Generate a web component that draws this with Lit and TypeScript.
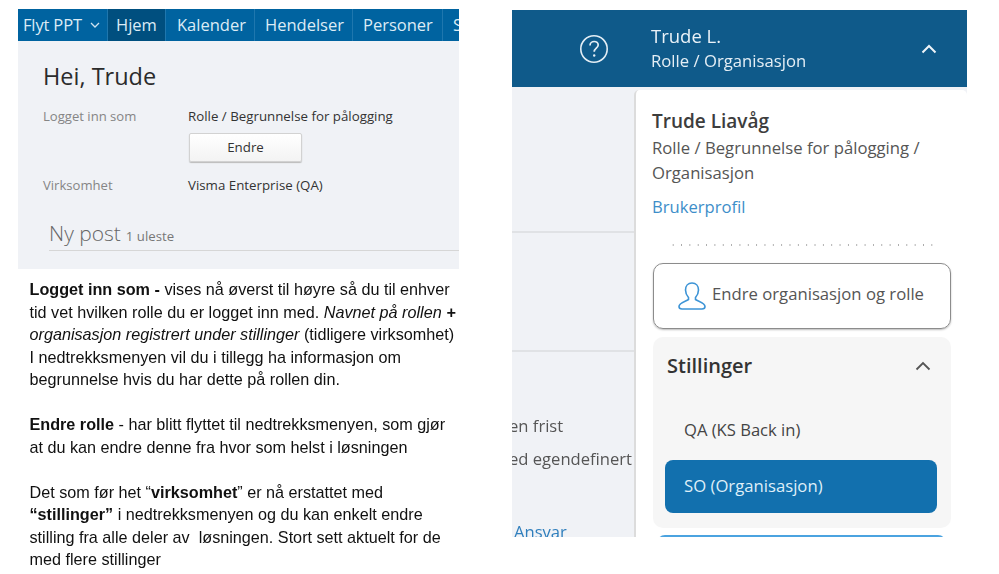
import { LitElement, html, css } from "lit";
import { customElement } from "lit/decorators.js";

@customElement("app-root")
export class AppRoot extends LitElement {
  static styles = css`
    :host { display: block; width: 999px; height: 574px; background: #fff; overflow: hidden; font-family: "Open Sans", sans-serif; }
    * { box-sizing: border-box; }
    .page { display: flex; height: 574px; align-items: flex-start; filter: blur(0.35px); }
    .left { width: 459px; margin-left: 18px; flex: none; }
    .shot { width: 441px; height: 260px; margin-top: 9px; background: #f0f2f6; overflow: hidden; }
    .nav { display: flex; height: 32px; background: #0063a0; color: #dcebf5; font-size: 16.5px; line-height: 31px; white-space: nowrap; overflow: hidden; }
    .nav div { display: flex; align-items: flex-start; border-right: 1px solid #1f77ae; flex: none; }
    .nav .flyt { width: 90px; padding-left: 5px; gap: 7px; letter-spacing: -0.15px; }
    .nav .flyt svg { margin-top: 12px; }
    .nav .hjem { width: 58px; padding-left: 8px; background: #004f7f; }
    .nav .kal { width: 89px; padding-left: 11px; }
    .nav .hen { width: 98px; padding-left: 10px; }
    .nav .per { width: 90px; padding-left: 10px; }
    .nav .s { border: 0; padding-left: 10px; }
    .body { padding: 19px 24px 0 25px; color: #333; }
    h1 { margin: 0; font-weight: 400; font-size: 23.5px; line-height: 32px; color: #2b2b2b; }
    .row { display: flex; font-size: 13.3px; line-height: 18px; }
    .row .k { width: 145px; color: #858585; flex: none; font-size: 13.1px; }
    .r1 { margin-top: 15px; }
    .r2 { margin-top: 14px; }
    .endre { display: block; width: 113px; height: 29px; margin: 8px 0 0 1px; border: 1px solid #d2d2d2; border-radius: 2px; background: linear-gradient(#fff, #f3f3f3); box-shadow: 0 1px 1px #bbb; text-align: center; font-size: 13.3px; line-height: 27px; color: #333; }
    .post { margin: 23px -24px 0 6px; border-bottom: 1px solid #d6d6d6; height: 34px; display: flex; align-items: baseline; gap: 5px; color: #666; font-size: 21px; line-height: 32px; font-weight: 300; }
    .post span { font-size: 13.2px; font-weight: 400; color: #777; }
    .notes { margin: 9px 0 0 11.5px; font-family: "Liberation Sans", sans-serif; font-size: 16.2px; line-height: 22.5px; color: #111; white-space: nowrap; }
    .notes p { margin: 0 0 22.5px; }
    .right { width: 455px; margin: 10px 0 0 35px; height: 527px; flex: none; overflow: hidden; display: flex; flex-direction: column; }
    .bar { height: 77px; flex: none; background: #0f5a8a; color: #fff; display: flex; align-items: center; }
    .help { margin-left: 67px; width: 30px; height: 30px; flex: none; }
    .who { margin-left: 42px; width: 269px; font-size: 18.5px; line-height: 25px; color: #eaf2f8; margin-top: -1px; }
    .who small { display: block; font-size: 16.7px; line-height: 25px; font-weight: 500; color: #e4eef5; }
    .below { flex: 1; display: flex; min-height: 0; background: #f0f2f6; }
    .bg { width: 122px; flex: none; color: #555; font-size: 16.6px; line-height: 33px; white-space: nowrap; overflow: hidden; }
    .bg .d1 { height: 146px; border-bottom: 2px solid #e0e2e5; }
    .bg .d2 { height: 119px; border-bottom: 2px solid #e0e2e5; }
    .bg .t1 { margin: 57px 0 0 -3px; }
    .bg .t2 { margin-left: -3px; }
    .bg .a { margin: 40px 0 0 2px; color: #2f7fbd; }
    .menu { flex: 1; margin-top: 3px; background: #fff; border-left: 2px solid #dcdcdc; border-radius: 5px 5px 0 0; padding: 0 16px 0 17px; min-width: 0; color: #505050; font-size: 16.6px; }
    .name { margin-top: 18px; font-size: 19px; line-height: 26px; font-weight: 600; color: #3d3d3d; margin-left: -1px; }
    .roles { margin-top: 2px; line-height: 24.5px; font-size: 16.7px; color: #555; margin-left: -1px; }
    .prof { display: block; margin: 10px 0 0 -1px; line-height: 24px; color: #3d8ec9; }
    .dots { margin: 25px 16px 0 16px; height: 2px; background: radial-gradient(circle, #aaa 0.8px, transparent 1px) 0 0 / 8.35px 2px repeat-x; }
    .change { margin-top: 17px; height: 66px; width: 298px; border: 1.5px solid #8c8c8c; border-radius: 10px; box-shadow: 0 1px 2px #bbb; display: flex; align-items: center; padding: 0 0 5px 23px; gap: 5px; color: #555; font-size: 16.7px; white-space: nowrap; }
    .change svg { margin-top: 4px; flex: none; }
    .pos { margin-top: 8px; width: 298px; height: 191px; border-radius: 10px; background: #f6f6f6; padding: 0 14px 0 12px; }
    .pos .h { display: flex; justify-content: space-between; align-items: center; padding: 0 5px 0 2px; height: 57px; font-size: 20px; font-weight: 600; color: #333; }
    .qa { margin-top: 23px; padding-left: 19px; line-height: 26px; font-size: 16.6px; color: #444; }
    .so { margin-top: 17px; height: 53px; border-radius: 8px; background: #1270ae; color: #dfeef8; padding-left: 19px; line-height: 52px; font-size: 16.7px; }
    .next { margin: 7px 0 0 4px; width: 289px; height: 20px; border-radius: 8px 8px 0 0; background: #1b77b8; border-top: 2px solid #4ba3e0; }
  `;

  render() {
    return html`<div class="page">
      <div class="left">
        <div class="shot">
          <div class="nav">
            <div class="flyt">Flyt PPT
              <svg width="12" height="8" viewBox="0 0 12 8"><path d="M2 2l4 4 4-4" fill="none" stroke="#cfe3f0" stroke-width="1.3"/></svg>
            </div>
            <div class="hjem">Hjem</div>
            <div class="kal">Kalender</div>
            <div class="hen">Hendelser</div>
            <div class="per">Personer</div>
            <div class="s">Søk</div>
          </div>
          <div class="body">
            <h1>Hei, Trude</h1>
            <div class="row r1"><div class="k">Logget inn som</div>
              <div>Rolle / Begrunnelse for pålogging<span class="endre">Endre</span></div></div>
            <div class="row r2"><div class="k">Virksomhet</div><div>Visma Enterprise (QA)</div></div>
            <div class="post">Ny post <span>1 uleste</span></div>
          </div>
        </div>
        <div class="notes">
          <p><b>Logget inn som -</b> vises nå øverst til høyre så du til enhver<br>tid vet hvilken rolle du er logget inn med. <i>Navnet på rollen <b>+</b><br>organisasjon registrert under stillinger</i> (tidligere virksomhet)<br>I nedtrekksmenyen vil du i tillegg ha informasjon om<br>begrunnelse hvis du har dette på rollen din.</p>
          <p><b>Endre rolle</b> - har blitt flyttet til nedtrekksmenyen, som gjør<br>at du kan endre denne fra hvor som helst i løsningen</p>
          <p>Det som før het “<b>virksomhet</b>” er nå erstattet med<br><b>“stillinger”</b> i nedtrekksmenyen og du kan enkelt endre<br>stilling fra alle deler av&nbsp; løsningen. Stort sett aktuelt for de<br>med flere stillinger</p>
        </div>
      </div>
      <div class="right">
        <div class="bar">
          <svg class="help" viewBox="0 0 30 30"><circle cx="15" cy="15" r="13.2" fill="none" stroke="#e4eef5" stroke-width="1.6"/><path d="M11 11.500c0-2.500 2-4 4.200-4s4 1.500 4 3.600c0 3-4 3.200-4 6.600" fill="none" stroke="#e4eef5" stroke-width="1.700"/><circle cx="15.200" cy="21.500" r="1.200" fill="#e4eef5"/></svg>
          <div class="who">Trude L.<small>Rolle / Organisasjon</small></div>
          <svg width="18" height="12" viewBox="0 0 18 12"><path d="M2.500 9.500L9 3l6.500 6.500" fill="none" stroke="#eef4f8" stroke-width="2"/></svg>
        </div>
        <div class="below">
          <div class="bg">
            <div class="d1"></div>
            <div class="d2"></div>
            <div class="t1">en frist</div>
            <div class="t2">ed egendefinert</div>
            <div class="a">Ansvar</div>
          </div>
          <div class="menu">
            <div class="name">Trude Liavåg</div>
            <div class="roles">Rolle / Begrunnelse for pålogging /<br>Organisasjon</div>
            <span class="prof">Brukerprofil</span>
            <div class="dots"></div>
            <div class="change">
              <svg width="30" height="30" viewBox="0 0 30 30"><path d="M15 2c-4 0-6.500 3-6.500 7 0 3 1.200 5.500 3 7.500v2c-3 2-9.500 3-9.500 7 0 1.500 1.500 2.500 3 2.500h20c1.500 0 3-1 3-2.500 0-4-6.500-5-9.500-7v-2c1.800-2 3-4.500 3-7.500 0-4-2.500-7-6.500-7z" fill="none" stroke="#3d94d6" stroke-width="1.600"/></svg>
              Endre organisasjon og rolle
            </div>
            <div class="pos">
              <div class="h">Stillinger
                <svg width="18" height="12" viewBox="0 0 18 12"><path d="M2.500 9.500L9 3l6.500 6.500" fill="none" stroke="#555" stroke-width="1.800"/></svg>
              </div>
              <div class="qa">QA (KS Back in)</div>
              <div class="so">SO (Organisasjon)</div>
            </div>
            <div class="next"></div>
          </div>
        </div>
      </div>
    </div>`;
  }
}
